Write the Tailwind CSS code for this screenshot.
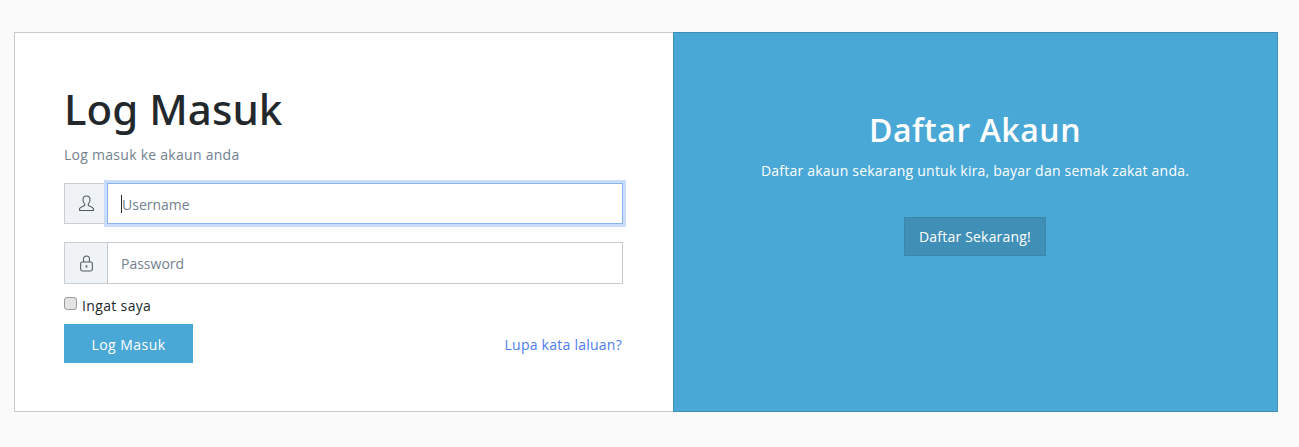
<!DOCTYPE html>
<html><head><meta charset="utf-8"><title>Log Masuk</title>
<script src="https://cdn.jsdelivr.net/npm/@tailwindcss/browser@4"></script></head>
<body class="bg-[#fafafa] h-[447px] overflow-hidden font-['Open_Sans','Noto_Sans',sans-serif] pt-8 pl-[14px]">
<div class="flex w-[1264px] h-[380px]">
  <div class="w-[659px] bg-white border border-[#c8c9ca] border-r-0 pl-[49px] pr-[50px] pt-[48px]">
    <h1 class="font-['Noto_Sans',sans-serif] text-[42px] leading-[56px] font-medium text-[#23282c] tracking-[0.05px]">Log Masuk</h1>
    <p class="text-[14px] leading-[21px] text-[#73818f] mt-[7px] tracking-[0.27px]">Log masuk ke akaun anda</p>
    <div class="flex h-[41px] mt-[18px]">
      <div class="w-[43px] flex items-center justify-center bg-[#f0f3f5] border border-[#c8ced3] border-r-0">
        <svg width="17" height="17" viewBox="0 0 16 16" fill="none" stroke="#4f5a64" stroke-width="1"><path d="M8 1c-2 0-3.300 1.500-3.300 3.600 0 1.600.7 3 1.600 3.800v1.500c-1.700.7-4.300 1.300-4.800 2.800v1.800h13v-1.800c-.5-1.500-3.100-2.100-4.800-2.800V8.400c.9-.8 1.600-2.200 1.600-3.800C11.300 2.500 10 1 8 1z"/></svg>
      </div>
      <div class="flex-1 flex items-center bg-white border border-[#8ab4f0] shadow-[0_0_0_3px_#c9dcfb] pl-[13px] relative">
        <span class="w-px h-[18px] bg-[#23282c]"></span>
        <span class="text-[14px] text-[#73818f] mt-[2px]">Username</span>
      </div>
    </div>
    <div class="flex h-[42px] mt-[18px]">
      <div class="w-[43px] flex items-center justify-center bg-[#f0f3f5] border border-[#c8ced3] border-r-0">
        <svg width="17" height="17" viewBox="0 0 16 16" fill="none" stroke="#4f5a64" stroke-width="1"><path d="M5.200 6.500V4.200C5.200 2.400 6.400 1 8 1s2.800 1.400 2.800 3.200v2.300"/><rect x="2.500" y="6.500" width="11" height="8.500" rx="1.500"/><path d="M8 9.800v2" stroke-width="1.600"/></svg>
      </div>
      <div class="flex-1 flex items-center bg-white border border-[#c8c9ca] pl-[13px]">
        <span class="text-[14px] text-[#73818f]">Password</span>
      </div>
    </div>
    <label class="flex items-center h-[21px] mt-[11px] text-[14px] text-[#23282c] tracking-[0.35px]">
      <input type="checkbox" class="appearance-none w-[13px] h-[13px] mr-[5px] -mt-[5px] rounded-[3px] bg-[#e4e4e4] border border-[#9a9a9a]">Ingat saya
    </label>
    <div class="flex items-center justify-between mt-[8px]">
      <button class="w-[129px] h-[39px] pt-[2px] bg-[#4aa8d6] text-white text-[14px] tracking-[0.45px]">Log Masuk</button>
      <a class="text-[14px] text-[#4d7cf0] tracking-[0.25px] pr-px mt-[2px]">Lupa kata laluan?</a>
    </div>
  </div>
  <div class="flex-1 bg-[#4aa8d6] border border-[#3f8fb6] text-white text-center pt-[73px] pr-px">
    <h2 class="text-[32px] leading-[48px] font-semibold tracking-[0.55px]">Daftar Akaun</h2>
    <p class="text-[14px] leading-[21px] mt-[6px] tracking-[0.22px]">Daftar akaun sekarang untuk kira, bayar dan semak zakat anda.</p>
    <button class="mt-[36px] w-[142px] h-[39px] bg-[#3f8fb6] border border-[#3b86ab] text-white text-[14px] tracking-[0.2px]">Daftar Sekarang!</button>
  </div>
</div>
</body></html>
